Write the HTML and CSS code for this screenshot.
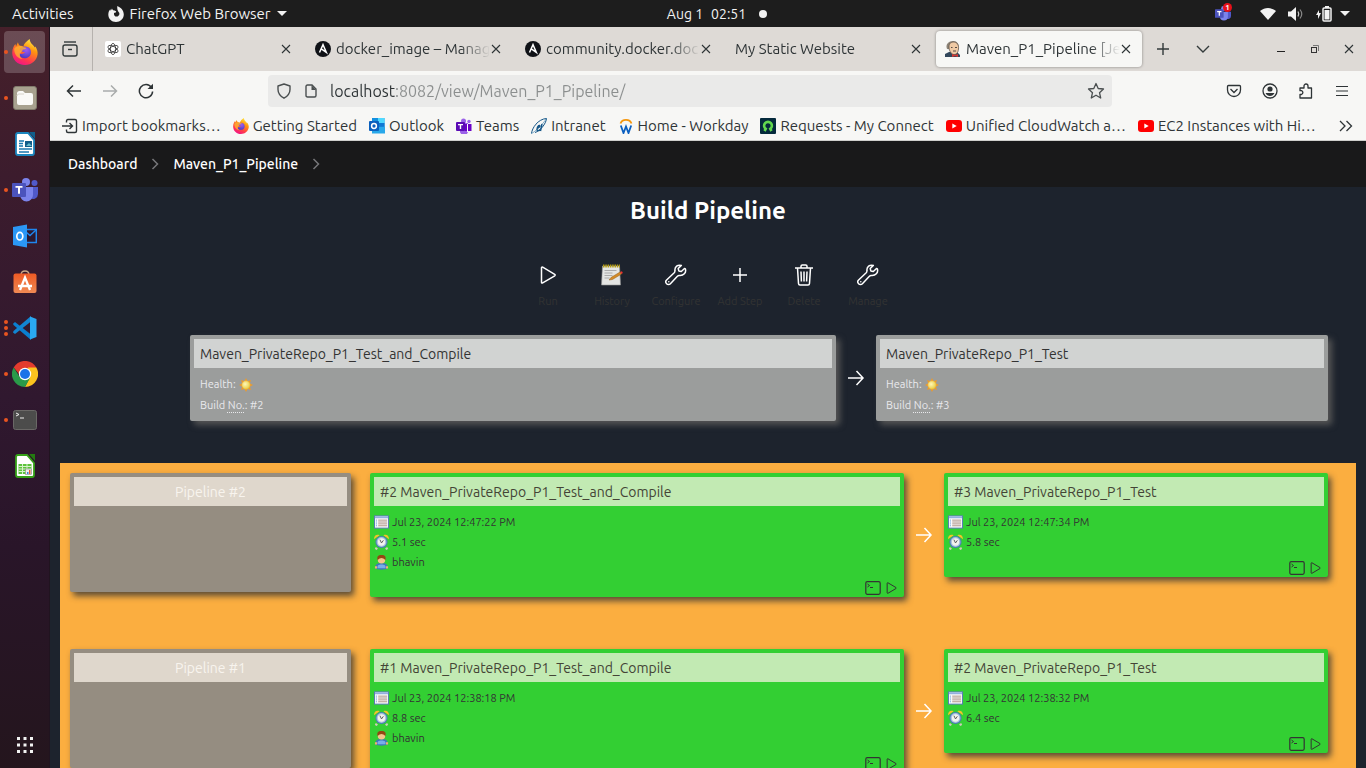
FILE: index.html
```html
<!DOCTYPE html>
<html lang="en">
<head>
<meta charset="utf-8">
<title>Maven_P1_Pipeline [Jenkins]</title>
<link rel="stylesheet" href="styles.css">
</head>
<body>
<svg class="defs" width="0" height="0" aria-hidden="true">
  <defs>
    <linearGradient id="fx" x1="0.8" y1="0" x2="0.3" y2="1"><stop offset="0" stop-color="#fff44f"/><stop offset=".35" stop-color="#ff980e"/><stop offset=".75" stop-color="#ff3750"/><stop offset="1" stop-color="#f0138a"/></linearGradient>
    <radialGradient id="fxg" cx=".6" cy=".3" r=".7"><stop offset="0" stop-color="#a05bf0"/><stop offset="1" stop-color="#4a3cc4"/></radialGradient>
    <radialGradient id="sung" cx=".4" cy=".4" r=".6"><stop offset="0" stop-color="#fff6b8"/><stop offset="1" stop-color="#e8cf45"/></radialGradient>
    <linearGradient id="bag" x1="0" y1="0" x2="0" y2="1"><stop offset="0" stop-color="#ee5a24"/><stop offset="1" stop-color="#f08a54"/></linearGradient>
    <symbol id="firefox" viewBox="0 0 24 24"><path fill="url(#fx)" d="M12 24C5 24 .2 18.800 .2 12.600 .2 8.500 2 6 3.200 4.600c.1 1 .3 1.500.6 2C4.500 5.200 5 4 5.500 3c.4 1.700 1 2.700 2 3.300 1.200-.1 2.200.2 3 .7C11 4 13.500 2 16.300 0c.2 2.300 1 3.500 2.300 4.800 1.300 1.200 2 2 2.400 3l.6-.8c1.600 2.300 2.300 5 2 7.300C22.800 19.800 18 24 12 24z"/><path fill="url(#fxg)" d="M12 7c3.300 0 5.500 2 5.500 5.200S15 17.800 11.800 17.800 6.500 16 6.500 13c2 1.300 4 .8 5.500-.8-2.700 0-4.500-1.200-5-2.700C8 8.500 9.500 7 12 7z"/><path fill="#ffb02e" d="M2 9c1.500-2.200 4.500-3 7-2.300 1.200.5 2.500 1.200 4.300 1.500-.6 1.300-2.200 1.500-3.300 1.600-.2 1.700-1.600 2.200-2.400 3.700-1 2 .4 4 2.600 4.800C6 18.500 2 15 2 9z" opacity=".8"/></symbol>
    <symbol id="foxmono" viewBox="0 0 16 16"><path fill="#f2f2f2" d="M8 16C3.500 16 .3 12.700.3 8.500.3 6 1.300 4.500 2.300 3.300l.5 1.500L4 2.500c.4 1 .8 1.500 1.700 1.900 1.500 0 2.400.6 2.500 1.300-.3 1-1.500 1-2.200 1.200-.3 2.700 1.300 3.900 2.800 3.700C11 10.400 12 8 11 6.500 10 5 9 4 9.300 0c3.800 1.500 6.500 4.500 6.500 8.500C15.800 12.800 12.300 16 8 16z"/></symbol>
    <symbol id="teams" viewBox="0 0 26 24"><circle cx="14" cy="4" r="4" fill="#7b83eb"/><circle cx="22.500" cy="5" r="3" fill="#5059c9"/><path fill="#5059c9" d="M17 9h9v7a5 5 0 0 1-8 4z"/><path fill="#7b83eb" d="M8 9h13v8a6.500 6.500 0 0 1-13 0z"/><rect y="5" width="14" height="14" rx="1" fill="#4b53bc"/><path fill="#fff" d="M3.500 8h7v1.800H8v6H6v-6H3.500z"/></symbol>
    <symbol id="teamsold" viewBox="0 0 16 16"><circle cx="7.500" cy="3" r="2.500" fill="#9b62e8"/><circle cx="13" cy="3.500" r="1.700" fill="#9b62e8"/><path fill="#9b62e8" d="M4 5h8v7a4 4 0 0 1-8 2z"/><path fill="#6b00c7" d="M9 6h6.500v7H9z"/><rect y="4" width="9" height="9" rx="1" fill="#5b0bb5"/><path fill="#fff" d="M2 6h5v1.300H5.200V11H3.800V7.300H2zM11 6h1v8h-1z"/></symbol>
    <symbol id="outlook" viewBox="0 0 16 16"><path fill="#1490df" d="M3 0h12.500v12H3z"/><path fill="#50d9ff" d="M9 0h6.500v5H9z"/><path fill="#0f78d4" d="M9 5h6.500v5H9z"/><path fill="#28a8ea" d="M3 15.500V9l13-.2v6.700z"/><rect y="3" width="10" height="10" rx="1" fill="#0a60bd"/><circle cx="5" cy="8" r="2.400" fill="none" stroke="#fff" stroke-width="1.500"/></symbol>
    <symbol id="close" viewBox="0 0 10 10"><path d="M1 1l8 8M9 1L1 9" fill="none" stroke="currentColor" stroke-width="1.100"/></symbol>
    <symbol id="ansible" viewBox="0 0 16 16"><circle cx="8" cy="8" r="8" fill="#101217"/><path d="M4.500 11.500L8 3.700l3.300 7.600-5-3.500" fill="none" stroke="#fff" stroke-width="1.500"/></symbol>
    <symbol id="youtube" viewBox="0 0 16 12"><rect width="16" height="12" rx="3" fill="#f00"/><path d="M6.300 3.500v5l4.400-2.500z" fill="#fff"/></symbol>
    <symbol id="arrow" viewBox="0 0 18 18"><path d="M1 9h15M9.500 2L16 9l-6.500 7" fill="none" stroke="#fff" stroke-width="1.500"/></symbol>
    <symbol id="play" viewBox="0 0 16 18"><path d="M1.500 1.800v14.400c0 .8.600 1 1.200.7l12-7.100c.6-.4.600-1.100 0-1.500l-12-7.100c-.6-.3-1.200-.1-1.200.6z" fill="none" stroke="currentColor" stroke-width="1.500"/></symbol>
    <symbol id="wrench" viewBox="0 0 22 22"><path d="M19.500 4.500l-3.200 3-2.500-.6-.6-2.400 3.100-3.100c-3.700-1-6.700 1.300-6.400 5.300.1.900-.1 1.500-.7 2.100L1.600 16c-1 1-1 2.700 0 3.700s2.800 1.100 3.800 0l7-7.500c.6-.6 1.200-.8 2-.7 4 .4 7.100-2.700 6-6.500z" fill="none" stroke="#fff" stroke-width="1.500" stroke-linejoin="round"/><circle cx="3.800" cy="17.700" r=".8" fill="#fff"/></symbol>
    <symbol id="sun" viewBox="0 0 16 16"><g fill="#ed9a2b"><path d="M8 0l2 4H6zM8 16l2-4H6zM0 8l4-2v4zM16 8l-4-2v4z"/><path d="M2.300 2.300l4.300 1.500-2.800 2.800zM13.700 2.300L9.400 3.800l2.800 2.800zM2.300 13.700l4.300-1.500-2.800-2.800zM13.700 13.700l-4.300-1.500 2.800-2.800z"/></g><circle cx="8" cy="8" r="4.800" fill="url(#sung)" stroke="#e8a93a" stroke-width=".6"/></symbol>
    <symbol id="date" viewBox="0 0 16 14"><rect x=".5" y=".5" width="15" height="13" fill="#fafafa" stroke="#5578b4"/><path fill="#92afe0" d="M1 1h14v2H1z"/><path d="M2 5h1M2 7h1M2 9h1M2 11h1" stroke="#4a90d9"/><path d="M4.500 5H14M4.500 7H14M4.500 9H14M4.500 11H14" stroke="#ab8f82"/></symbol>
    <symbol id="clock" viewBox="0 0 16 16"><path d="M3 14l-1 2M13 14l1 2" stroke="#d1cbbb" stroke-width="2.500"/><path fill="#f4c22b" d="M0 5C0 1 3-.5 6 .8zM16 5C16 1 13-.5 10 .8z"/><circle cx="8" cy="8" r="6.500" fill="#4c7cb9"/><circle cx="8" cy="8" r="5.300" fill="#a9c2dc"/><circle cx="8" cy="8" r="3.900" fill="#f3f3ef"/><path d="M6.300 5.500L8 9l2-2.800" fill="none" stroke="#555"/></symbol>
    <symbol id="user" viewBox="0 0 16 16"><path fill="#3f75bd" d="M1 14.500C1 11 3 9 5 8.800h6c2 .2 4 2.200 4 5.700-4 1.500-10 1.500-14 0z"/><path fill="#77aee9" d="M4 14c-1-3 1-4 4-4s5 1 4 4z"/><path fill="#f0b36e" d="M1 12h2.300v2.500H1zM12.700 12H15v2.500h-2.300z"/><circle cx="8" cy="5" r="4" fill="#f5c48b"/><path fill="#934713" d="M3.800 5.500C3 1.500 4 0 8 0s5 1.500 4.200 5.500C11 4 9 3.200 8 3.200S5 4 3.800 5.500z"/></symbol>
    <symbol id="term" viewBox="0 0 16 14"><rect x=".8" y=".7" width="14.400" height="12.600" rx="1.500" fill="none" stroke="#333" stroke-width="1.200"/><path d="M2.500 3l2 1.500-2 1.500M5 6.500h3" fill="none" stroke="#333"/></symbol>
    <symbol id="sep" viewBox="0 0 8 12"><path d="M1.500 1l5 5-5 5" fill="none" stroke="#77777a" stroke-width="1.500"/></symbol>
  </defs>
</svg>

<header class="topbar">
  <div class="top-left">
    <button>Activities</button>
    <button class="app-menu"><svg width="16" height="16"><use href="#foxmono"/></svg>Firefox Web Browser<i class="caret"></i></button>
  </div>
  <button class="clock"><span>Aug 1</span><span>02:51</span><i class="notice"></i></button>
  <div class="tray">
    <span class="tray-teams"><svg width="16" height="15"><use href="#teams"/></svg><b class="badge">1</b></span>
    <svg width="16" height="12" viewBox="0 0 16 12"><path fill="#f2f2f2" d="M0 3C5-1 11-1 16 3L8 12z"/></svg>
    <svg width="16" height="14" viewBox="0 0 16 14"><path fill="#f2f2f2" d="M0 4.500h3L8 0v14L3 9.500H0z"/><path d="M10 4.500q1.500 2.500 0 5" fill="none" stroke="#ccc" stroke-width="1.200"/><path d="M12 2.500q3.500 4.500 0 9" fill="none" stroke="#888" stroke-width="1.200"/></svg>
    <svg width="16" height="16" viewBox="0 0 16 16"><path fill="#f2f2f2" d="M3 4L0 9h2v4l3-6H3z"/><path fill="#f2f2f2" d="M9 0h4v2H9z"/><rect x="7" y="2" width="8" height="13" rx="1" fill="none" stroke="#f2f2f2" stroke-width="1.500"/><path fill="#f2f2f2" d="M8.500 4h5v9.500h-5z"/></svg>
    <i class="caret"></i>
  </div>
</header>

<div class="desktop">
  <nav class="dock" aria-label="Dock">
    <button class="dock-item running active" aria-label="Firefox"><svg width="26" height="26"><use href="#firefox"/></svg></button>
    <button class="dock-item running" aria-label="Files"><svg width="24" height="24" viewBox="0 0 24 24"><rect x=".5" y=".5" width="23" height="23" rx="2.500" fill="#a8a18f" stroke="#817b6c"/><path fill="#faf9f7" d="M4 7.500A2.500 2.500 0 0 1 6.500 5H10l2 2h6a2 2 0 0 1 2 2v8a2 2 0 0 1-2 2H6a2 2 0 0 1-2-2z"/><path d="M4 10q0-2 2-2h5" fill="none" stroke="#d8d4cb"/></svg></button>
    <button class="dock-item" aria-label="Writer"><svg width="20" height="24" viewBox="0 0 20 24"><path fill="#fff" stroke="#1b86be" stroke-width="1.800" d="M1 3q0-2 2-2h10l6 7v13q0 2-2 2H3q-2 0-2-2z"/><path fill="#105f8b" d="M14 0h6v7z"/><path d="M4 9h5M4 11.500h4M4 14h4M4 17h13M4 20h10" stroke="#1a78ae" stroke-width="1.400"/><rect x="10" y="9" width="7" height="6" fill="#125d89"/><path d="M11 14l3-3 3 3z" fill="#6bc"/></svg></button>
    <button class="dock-item running" aria-label="Teams"><svg width="26" height="24"><use href="#teams"/></svg></button>
    <button class="dock-item" aria-label="Outlook"><svg width="24" height="24" viewBox="0 0 24 24"><rect x="12" y="5.500" width="11.300" height="13" fill="#2c1930" stroke="#1f86ee" stroke-width="1.500"/><path d="M13 8l4 3.500L23 6" fill="none" stroke="#1f86ee" stroke-width="1.500"/><path fill="#2b97f5" d="M0 3l14-2.500v23L0 21z"/><ellipse cx="6.800" cy="12.200" rx="3" ry="3.800" fill="none" stroke="#fff" stroke-width="1.700"/></svg></button>
    <button class="dock-item" aria-label="Software"><svg width="24" height="24" viewBox="0 0 24 24"><path d="M8 5q0-4 4-4t4 4" fill="none" stroke="#c9a988" stroke-width="1.300"/><rect x=".5" y="3.500" width="23" height="19.500" rx="2" fill="url(#bag)"/><path d="M7 20l5-12.500L17 20M5 16h14" fill="none" stroke="#fff" stroke-width="2.300"/></svg></button>
    <button class="dock-item running many" aria-label="Code"><svg width="24" height="24" viewBox="0 0 24 24"><path fill="#0a7fd0" d="M0 7.700L2 6l16 12.500V24L.5 9z"/><path fill="#1285d2" d="M0 16.500L2 18 18 5.500V0L.5 15z"/><path fill="#2aa8f2" d="M17 .5L23.500 3v18L17 23.500z"/></svg></button>
    <button class="dock-item running" aria-label="Chrome"><svg width="26" height="26" viewBox="0 0 26 26"><path fill="#e33b2e" d="M1.700 6.500a13 13 0 0 1 22.600 0L19 13H7z"/><path fill="#fcc31e" d="M24.300 6.500A13 13 0 0 1 13 26l5-10-2-9.500z"/><path fill="#2a9a49" d="M1.700 6.500A13 13 0 0 0 13 26l5-9-10-.5z"/><circle cx="13" cy="13" r="6.200" fill="#fff"/><circle cx="13" cy="13" r="5" fill="#1b73e8"/></svg></button>
    <button class="dock-item running" aria-label="Terminal"><svg width="24" height="20" viewBox="0 0 24 20"><rect x=".5" y=".5" width="23" height="19" rx="2" fill="#4c4c4b" stroke="#6a6866"/><path d="M3 3l3 1.500L3 6M7 8h4" fill="none" stroke="#eee"/></svg></button>
    <button class="dock-item" aria-label="Calc"><svg width="20" height="24" viewBox="0 0 20 24"><path fill="#fff" stroke="#35a018" stroke-width="1.800" d="M1 3q0-2 2-2h9l7 8v12q0 2-2 2H3q-2 0-2-2z"/><path fill="#247b11" d="M14 0h6v7z"/><rect x="3.500" y="10" width="13" height="10" fill="#5cc33c"/><path d="M3.500 12.500h13M3.500 15h13M3.500 17.500h13M7.500 10v10M12 10v10" stroke="#d6f2ca"/><rect x="10.500" y="15" width="6" height="5.500" fill="#eee" stroke="#888" stroke-width=".6"/><path fill="#e45a35" d="M14 16h1.500v4H14z"/><path fill="#3a87d6" d="M12 18h1.500v2H12z"/></svg></button>
    <button class="dock-item apps" aria-label="Show applications"><svg width="18" height="18" viewBox="0 0 18 18" fill="#f2f2f2"><path d="M1 1h3v3H1zM7.500 1h3v3h-3zM14 1h3v3h-3zM1 7.500h3v3H1zM7.500 7.500h3v3h-3zM14 7.500h3v3h-3zM1 14h3v3H1zM7.500 14h3v3h-3zM14 14h3v3h-3z"/></svg></button>
  </nav>

  <div class="browser">
    <div class="tabstrip">
      <button class="fx-view" aria-label="Firefox View"><svg width="16" height="16" viewBox="0 0 16 16" fill="none" stroke="#333a3b" stroke-width="1.400"><path d="M2 1h12"/><rect x="1" y="4" width="14" height="11" rx="2"/><path d="M6 8.500h4"/></svg></button>
      <div class="tab"><svg width="16" height="16" viewBox="0 0 16 16"><rect width="16" height="16" rx="2" fill="#fff"/><g fill="none" stroke="#222" stroke-width=".7"><ellipse cx="8" cy="8" rx="2.600" ry="5.600"/><ellipse cx="8" cy="8" rx="2.600" ry="5.600" transform="rotate(60 8 8)"/><ellipse cx="8" cy="8" rx="2.600" ry="5.600" transform="rotate(120 8 8)"/></g></svg><span class="tab-title">ChatGPT</span><button class="tab-close" aria-label="Close tab"><svg width="10" height="10"><use href="#close"/></svg></button></div>
      <div class="tab"><svg width="16" height="16"><use href="#ansible"/></svg><span class="tab-title">docker_image – Manag</span><button class="tab-close" aria-label="Close tab"><svg width="10" height="10"><use href="#close"/></svg></button></div>
      <div class="tab"><svg width="16" height="16"><use href="#ansible"/></svg><span class="tab-title">community.docker.doc</span><button class="tab-close" aria-label="Close tab"><svg width="10" height="10"><use href="#close"/></svg></button></div>
      <div class="tab"><span class="tab-title">My Static Website</span><button class="tab-close" aria-label="Close tab"><svg width="10" height="10"><use href="#close"/></svg></button></div>
      <div class="tab current"><svg width="16" height="16" viewBox="0 0 16 16"><path fill="#33475b" d="M0 16v-3l4-2h8l3 3v2z"/><path fill="#8d8478" d="M2 8C0 3 4 0 8 0s7 3 5 9z"/><path fill="#efc9a4" stroke="#574c44" stroke-width=".7" d="M4 6c0-4 2-5 5-5s5 3 4.500 7-2 5.500-4.500 5.500S4 10 4 6z"/><path d="M6 6.500h1.500M10 6.500h2M8 10h3" stroke="#574c44"/><path fill="#d33833" d="M7 13l3 1 3-1v3l-3-1-3 1z"/></svg><span class="tab-title">Maven_P1_Pipeline [Je</span><button class="tab-close" aria-label="Close tab"><svg width="10" height="10"><use href="#close"/></svg></button></div>
      <button class="strip-btn" aria-label="New tab"><svg width="14" height="14" viewBox="0 0 14 14"><path d="M7 1v12M1 7h12" stroke="#333a3b" stroke-width="1.400"/></svg></button>
      <button class="strip-btn" aria-label="List all tabs"><svg width="14" height="14" viewBox="0 0 14 14"><path d="M1 4l6 6 6-6" fill="none" stroke="#333a3b" stroke-width="1.400"/></svg></button>
      <div class="window-buttons">
        <button class="win-btn" aria-label="Minimise"><svg width="10" height="10" viewBox="0 0 10 10"><path d="M1 7.500h8" stroke="#222"/></svg></button>
        <button class="win-btn" aria-label="Restore"><svg width="10" height="10" viewBox="0 0 10 10" fill="none" stroke="#333"><rect x="1.500" y="3.500" width="5" height="5"/><path d="M3 1.500h5.500V7" stroke="#777"/></svg></button>
        <button class="win-btn" aria-label="Close window"><svg width="10" height="10"><use href="#close"/></svg></button>
      </div>
    </div>

    <div class="toolbar">
      <button class="tool" aria-label="Back"><svg width="16" height="16" viewBox="0 0 16 16"><path d="M15 8H1.500M7 2.500L1.500 8 7 13.500" fill="none" stroke="#2e3436" stroke-width="1.500"/></svg></button>
      <button class="tool" aria-label="Forward"><svg width="16" height="16" viewBox="0 0 16 16"><path d="M1 8h13.500M9 2.500L14.500 8 9 13.500" fill="none" stroke="#a9acac" stroke-width="1.500"/></svg></button>
      <button class="tool" aria-label="Reload"><svg width="16" height="16" viewBox="0 0 16 16"><path d="M13.500 4.500A6.600 6.600 0 1 0 14.600 8.500" fill="none" stroke="#2e3436" stroke-width="1.500"/><path fill="#2e3436" d="M15 .8V6H9.500z"/></svg></button>
      <div class="urlbar">
        <svg width="16" height="16" viewBox="0 0 16 16"><path d="M8 1l6 2v3.500c0 4-2.200 6.600-6 8.700-3.800-2.100-6-4.700-6-8.700V3z" fill="none" stroke="#4a4f50" stroke-width="1.400" stroke-linejoin="round"/></svg>
        <svg width="12" height="14" viewBox="0 0 12 14"><path d="M1 2.500Q1 1 2.500 1H7l4 4v6.500q0 1.500-1.500 1.500h-7Q1 13 1 11.500z" fill="none" stroke="#4a4f50" stroke-width="1.400"/><path fill="#4a4f50" d="M6.500 1L11 6H6.500z"/></svg>
        <input class="url" type="text" aria-label="Address" value="localhost:8082/view/Maven_P1_Pipeline/">
        <button class="star" aria-label="Bookmark this page"><svg width="18" height="18" viewBox="0 0 18 18"><path d="M9 1.500l2.200 5 5.300.5-4 3.700 1.200 5.300L9 13.200 4.300 16l1.200-5.300-4-3.700 5.300-.5z" fill="none" stroke="#4a4f50" stroke-width="1.300" stroke-linejoin="round"/></svg></button>
      </div>
      <button class="tool" aria-label="Pocket"><svg width="16" height="14" viewBox="0 0 16 14" fill="none" stroke="#2e3436" stroke-width="1.300"><path d="M2.500 1.500h11q1 0 1 1V6a6.500 6.500 0 0 1-13 0V2.500q0-1 1-1z"/><path d="M4.500 5L8 8.500 11.500 5"/></svg></button>
      <button class="tool" aria-label="Account"><svg width="16" height="16" viewBox="0 0 16 16"><circle cx="8" cy="8" r="7" fill="none" stroke="#2e3436" stroke-width="1.300"/><circle cx="8" cy="6" r="2.600" fill="#2e3436"/><path fill="#2e3436" d="M3.500 10h9q-1.500 3-4.500 3t-4.500-3z"/></svg></button>
      <button class="tool" aria-label="Extensions"><svg width="16" height="16" viewBox="0 0 16 16"><path d="M2 5h4V3a2 2 0 0 1 4 0v2h3.500v10H2v-3.500h1.500a2 2 0 0 0 0-3.800H2z" fill="none" stroke="#2e3436" stroke-width="1.300" stroke-linejoin="round"/></svg></button>
      <button class="tool" aria-label="Menu"><svg width="14" height="14" viewBox="0 0 14 14"><path d="M1 2.500h12M1 7h12M1 11.500h12" stroke="#2e3436" stroke-width="1.200"/></svg></button>
    </div>

    <nav class="bookmarks" aria-label="Bookmarks">
      <a href="#"><svg width="16" height="16" viewBox="0 0 16 16"><path d="M4.500 4.500V3q0-1.500 1.500-1.500h7Q14.500 1.500 14.500 3v10q0 1.500-1.500 1.500H6Q4.500 14.500 4.500 13v-1.500M0 8h10M7.500 5L10.500 8l-3 3" fill="none" stroke="#2e3436" stroke-width="1.400"/></svg>Import bookmarks…</a>
      <a href="#"><svg width="16" height="16"><use href="#firefox"/></svg>Getting Started</a>
      <a href="#"><svg width="16" height="16"><use href="#outlook"/></svg>Outlook</a>
      <a href="#"><svg width="16" height="16"><use href="#teamsold"/></svg>Teams</a>
      <a href="#"><svg width="16" height="16" viewBox="0 0 16 16"><path d="M.5 15.500C1 10 7 1 15.500.5 15 6 9 13 4 14.500" fill="none" stroke="#135587" stroke-width="1"/><path d="M.5 15.500C4 14 12 6 15.500.5" fill="none" stroke="#4f8db5" stroke-width=".7"/><path d="M6.500 10q3-1 2-2.500-2 0-2.500 4 0 2 3 .5M11 6l-1.500 7" fill="none" stroke="#135587" stroke-width="1.400"/></svg>Intranet</a>
      <a href="#"><svg width="16" height="16" viewBox="0 0 16 16"><path d="M2.500 5.500a5.700 5 0 0 1 11 0" fill="none" stroke="#f5960b" stroke-width="1.800"/><path d="M2.800 7.500L5.500 15 8 8.500l2.500 6.500 2.700-7.500" fill="none" stroke="#0b5fc0" stroke-width="1.800"/></svg>Home - Workday</a>
      <a href="#"><svg width="16" height="16" viewBox="0 0 16 16"><rect width="16" height="16" rx="1" fill="#052a3c"/><path d="M4.500 13l1.200-2.100a3.900 3.900 0 1 1 4.600 0l1.200 2.100" fill="none" stroke="#62d84e" stroke-width="2.600"/></svg>Requests - My Connect</a>
      <a href="#"><svg width="16" height="12"><use href="#youtube"/></svg>Unified CloudWatch a…</a>
      <a href="#"><svg width="16" height="12"><use href="#youtube"/></svg>EC2 Instances with Hi…</a>
      <button class="more" aria-label="More bookmarks"><svg width="14" height="12" viewBox="0 0 14 12"><path d="M1 1l5 5-5 5M7.500 1l5 5-5 5" fill="none" stroke="#2e3436" stroke-width="1.300"/></svg></button>
    </nav>

    <main class="page">
      <nav class="crumbs" aria-label="Breadcrumb">
        <a href="#">Dashboard</a><svg width="8" height="12"><use href="#sep"/></svg><a href="#">Maven_P1_Pipeline</a><svg width="8" height="12"><use href="#sep"/></svg>
      </nav>
      <h1>Build Pipeline</h1>
      <div class="actions">
        <a href="#"><svg width="16" height="18"><use href="#play"/></svg>Run</a>
        <a href="#"><svg width="22" height="22" viewBox="0 0 22 22"><path fill="#e4e5e3" stroke="#999" stroke-width=".6" d="M1.500 2h17l1 19H.5z"/><path d="M2 2h17" stroke="#b39b12" stroke-width="3" stroke-dasharray="1.500 .8"/><path d="M3.500 6.500h12M3.500 9h8M3.500 11.500h8M3.500 14h5" stroke="#aaa"/><path d="M8 16l2-2.500L19 8l1.500 2-9 5.500z" fill="#d38a27" stroke="#956018" stroke-width=".5"/><path d="M19 8l2-.7.8 1.700-1.300 1z" fill="#e33"/></svg>History</a>
        <a href="#"><svg width="22" height="22"><use href="#wrench"/></svg>Configure</a>
        <a href="#"><svg width="16" height="16" viewBox="0 0 16 16"><path d="M8 1v14M1 8h14" stroke="#fff" stroke-width="1.500"/></svg>Add Step</a>
        <a href="#"><svg width="18" height="22" viewBox="0 0 18 22"><path d="M0 4h18M2.500 4l1 15.500q.1 1.500 1.500 1.500h8q1.400 0 1.500-1.500l1-15.500M6 4V2.300Q6 1 7.300 1h3.400Q12 1 12 2.300V4M6 7.500l.4 10M9 7.500v10M12 7.500l-.4 10" fill="none" stroke="#fff" stroke-width="1.500"/></svg>Delete</a>
        <a href="#"><svg width="22" height="22"><use href="#wrench"/></svg>Manage</a>
      </div>

      <section class="projects">
        <article class="card grey">
          <h2><a href="#">Maven_PrivateRepo_P1_Test_and_Compile</a></h2>
          <p>Health: <svg width="14" height="14"><use href="#sun"/></svg></p>
          <p>Build <abbr title="Number">No.</abbr>: #2</p>
        </article>
        <svg class="arrow" width="18" height="18"><use href="#arrow"/></svg>
        <article class="card grey">
          <h2><a href="#">Maven_PrivateRepo_P1_Test</a></h2>
          <p>Health: <svg width="14" height="14"><use href="#sun"/></svg></p>
          <p>Build <abbr title="Number">No.</abbr>: #3</p>
        </article>
      </section>

      <section class="builds">
        <div class="build-row">
          <article class="card revision"><h2>Pipeline #2</h2></article>
          <article class="card green">
            <h2><a href="#">#2 Maven_PrivateRepo_P1_Test_and_Compile</a></h2>
            <ul><li><svg width="15" height="14"><use href="#date"/></svg>Jul 23, 2024 12:47:22 PM</li><li><svg width="15" height="16"><use href="#clock"/></svg>5.1 sec</li><li><svg width="15" height="15"><use href="#user"/></svg>bhavin</li></ul>
            <div class="card-tools"><button aria-label="Console"><svg width="16" height="14"><use href="#term"/></svg></button><button aria-label="Re-run"><svg width="11" height="12"><use href="#play"/></svg></button></div>
          </article>
          <svg class="arrow" width="18" height="18"><use href="#arrow"/></svg>
          <article class="card green">
            <h2><a href="#">#3 Maven_PrivateRepo_P1_Test</a></h2>
            <ul><li><svg width="15" height="14"><use href="#date"/></svg>Jul 23, 2024 12:47:34 PM</li><li><svg width="15" height="16"><use href="#clock"/></svg>5.8 sec</li></ul>
            <div class="card-tools"><button aria-label="Console"><svg width="16" height="14"><use href="#term"/></svg></button><button aria-label="Re-run"><svg width="11" height="12"><use href="#play"/></svg></button></div>
          </article>
        </div>
        <div class="build-row">
          <article class="card revision"><h2>Pipeline #1</h2></article>
          <article class="card green">
            <h2><a href="#">#1 Maven_PrivateRepo_P1_Test_and_Compile</a></h2>
            <ul><li><svg width="15" height="14"><use href="#date"/></svg>Jul 23, 2024 12:38:18 PM</li><li><svg width="15" height="16"><use href="#clock"/></svg>8.8 sec</li><li><svg width="15" height="15"><use href="#user"/></svg>bhavin</li></ul>
            <div class="card-tools"><button aria-label="Console"><svg width="16" height="14"><use href="#term"/></svg></button><button aria-label="Re-run"><svg width="11" height="12"><use href="#play"/></svg></button></div>
          </article>
          <svg class="arrow" width="18" height="18"><use href="#arrow"/></svg>
          <article class="card green">
            <h2><a href="#">#2 Maven_PrivateRepo_P1_Test</a></h2>
            <ul><li><svg width="15" height="14"><use href="#date"/></svg>Jul 23, 2024 12:38:32 PM</li><li><svg width="15" height="16"><use href="#clock"/></svg>6.4 sec</li></ul>
            <div class="card-tools"><button aria-label="Console"><svg width="16" height="14"><use href="#term"/></svg></button><button aria-label="Re-run"><svg width="11" height="12"><use href="#play"/></svg></button></div>
          </article>
        </div>
      </section>
    </main>
  </div>
</div>
</body>
</html>
```

FILE: styles.css
```css
* { box-sizing: border-box; }
body {
  margin: 0;
  height: 100vh;
  display: flex;
  flex-direction: column;
  overflow: hidden;
  background: #1d232d;
  font: 15px/20px Ubuntu, "Noto Sans", sans-serif;
  color: #2e3436;
}
button {
  display: flex;
  align-items: center;
  justify-content: center;
  margin: 0;
  padding: 0;
  border: 0;
  background: none;
  font: inherit;
  color: inherit;
}
a { color: inherit; text-decoration: none; }
svg { flex: none; }
.defs { position: absolute; }

/* System bar */
.topbar {
  flex: none;
  display: grid;
  grid-template-columns: 1fr auto 1fr;
  align-items: center;
  height: 27px;
  padding: 0 16px 0 12px;
  background: #1d1d1d;
  color: #f2f2f2;
}
.top-left { display: flex; gap: 34px; }
.app-menu { gap: 6px; }
.caret {
  border: 5px solid transparent;
  border-top-color: #f2f2f2;
  border-bottom: 0;
}
.clock { gap: 8px; padding-left: 72px; font-size: 14px; }
.notice { width: 8px; height: 8px; margin-left: 5px; border-radius: 50%; background: #f2f2f2; }
.tray { justify-self: end; display: flex; align-items: center; gap: 12px; }
.tray .caret { margin-left: -4px; }
.tray-teams { position: relative; display: flex; margin-right: 17px; }
.badge {
  position: absolute;
  top: -3px;
  right: -1px;
  width: 9px;
  border-radius: 50%;
  background: #e8101a;
  font-size: 8px;
  line-height: 9px;
  text-align: center;
}

.desktop { flex: 1; min-height: 0; display: flex; }

/* Dock */
.dock {
  flex: none;
  display: flex;
  flex-direction: column;
  gap: 4px;
  width: 50px;
  padding: 4px 4px 2px;
  background: linear-gradient(#46202a, #3c1c2d 20%, #30182f 50%, #291529 70%, #24151d);
  border-right: 1px solid #20131f;
}
.dock-item { position: relative; height: 42px; border-radius: 4px; }
.dock-item.active { background: #ffffff33; }
.dock-item.apps { margin-top: auto; }
.running::before {
  content: "";
  position: absolute;
  left: 0;
  width: 4px;
  height: 4px;
  border-radius: 50%;
  background: #e95420;
}
.many::before { box-shadow: 0 -6px #e95420, 0 6px #e95420; }

/* Browser chrome */
.browser { flex: 1; min-width: 0; display: flex; flex-direction: column; }
.tabstrip { flex: none; display: flex; height: 44px; background: #dedad6; }
.fx-view { width: 43px; padding-right: 3px; border-right: 1px solid #b6b2ae; }
.tab {
  flex: 0 1 206px;
  min-width: 0;
  display: flex;
  align-items: center;
  gap: 5px;
  margin: 4px 1px 4px 3px;
  padding: 0 11px 0 9px;
  border-radius: 4px;
}
.tab.current { background: #f7f7f5; box-shadow: 0 0 3px #0006; }
.tab-title {
  flex: 1;
  overflow: hidden;
  white-space: nowrap;
  -webkit-mask-image: linear-gradient(to left, transparent, #000 30px);
  mask-image: linear-gradient(to left, transparent, #000 30px);
}
.tab-close { width: 10px; margin-left: -4px; }
.strip-btn { width: 40px; }
.window-buttons { display: flex; margin-left: auto; }
.win-btn { width: 34px; }

.toolbar { flex: none; display: flex; align-items: center; height: 40px; padding: 0 6px; background: #f7f7f5; }
.tool { width: 36px; height: 32px; }
.urlbar {
  flex: 1;
  display: flex;
  align-items: center;
  gap: 13px;
  height: 32px;
  margin: 0 104px;
  padding: 0 7px 0 8px;
  border-radius: 4px;
  background: #eaeae9;
}
.url {
  flex: 1;
  min-width: 0;
  padding: 0;
  border: 0;
  outline: 0;
  font: inherit;
  font-size: 16px;
  color: transparent;
  background: linear-gradient(to right, #2e3436 65px, #8b8e8e 65px);
  -webkit-background-clip: text;
  background-clip: text;
}

.bookmarks {
  flex: none;
  display: flex;
  align-items: center;
  gap: 12px;
  height: 30px;
  padding: 0 13px 0 12px;
  border-bottom: 1px solid #cfcfcc;
  background: #f7f7f5;
  white-space: nowrap;
}
.bookmarks a { display: flex; align-items: center; gap: 4px; }
.more { margin-left: auto; }

/* Jenkins page */
.page { flex: 1; min-height: 0; overflow: hidden; background: #1d232d; }
.crumbs {
  display: flex;
  align-items: center;
  gap: 14px;
  height: 46px;
  padding: 0 18px;
  background: #19191a;
  color: #fff;
  font-size: 14px;
  font-weight: 500;
}
h1 { margin: 8px 0 0; font-size: 24px; line-height: 32px; text-align: center; color: #fff; }
.actions { display: flex; justify-content: center; margin-top: 33px; color: #333; font-size: 11px; line-height: 16px; }
.actions a { display: grid; justify-items: center; grid-template-rows: 30px 22px; align-items: center; width: 64px; }
.actions svg { color: #fff; }

.card { padding: 4px; border-radius: 2px; box-shadow: 4px 4px 6px #555; font-size: 11px; }
.card h2 { margin: 0; padding: 5px 6px 4px; font-size: 14px; line-height: 20px; font-weight: 400; }
.arrow { justify-self: center; align-self: center; }

.projects {
  display: grid;
  grid-template-columns: 646fr 40px 452fr;
  margin: 23px 38px 42px 140px;
}
.grey { height: 86px; background: #9b9d9c; color: #e9e9ec; }
.grey h2 { margin-bottom: 6px; background: #d1d3d2; color: #333; }
.grey p { display: flex; align-items: center; gap: 1px; margin: 0 6px; line-height: 21px; white-space: pre; }
.grey p:last-child { gap: 0; }
abbr { text-decoration: underline dotted; text-underline-offset: 3px; }

.builds { display: grid; gap: 52px; margin: 0 10px; padding: 10px 28px 51px 10px; background: #fbae40; }
.build-row { display: grid; grid-template-columns: 281fr 19px 534fr 40px 384fr; align-items: start; }
.build-row .card { box-shadow: 3px 4px 6px #333c; }
.revision { height: 119px; background: #958d81; }
.revision h2 { background: #dfd7cc; color: #f8f4ee; text-align: center; }
.revision + .green { grid-column: 3; }
.green { padding-bottom: 2px; background: #33cf33; color: #333; }
.green h2 { background: #c2eab3; color: #444436; }
.green ul { margin: 6px 0 0; padding: 0; list-style: none; }
.green li { display: flex; align-items: center; gap: 3px; }
.card-tools { display: flex; justify-content: flex-end; align-items: center; gap: 5px; height: 14px; margin-top: 9px; padding-right: 3px; }
```
